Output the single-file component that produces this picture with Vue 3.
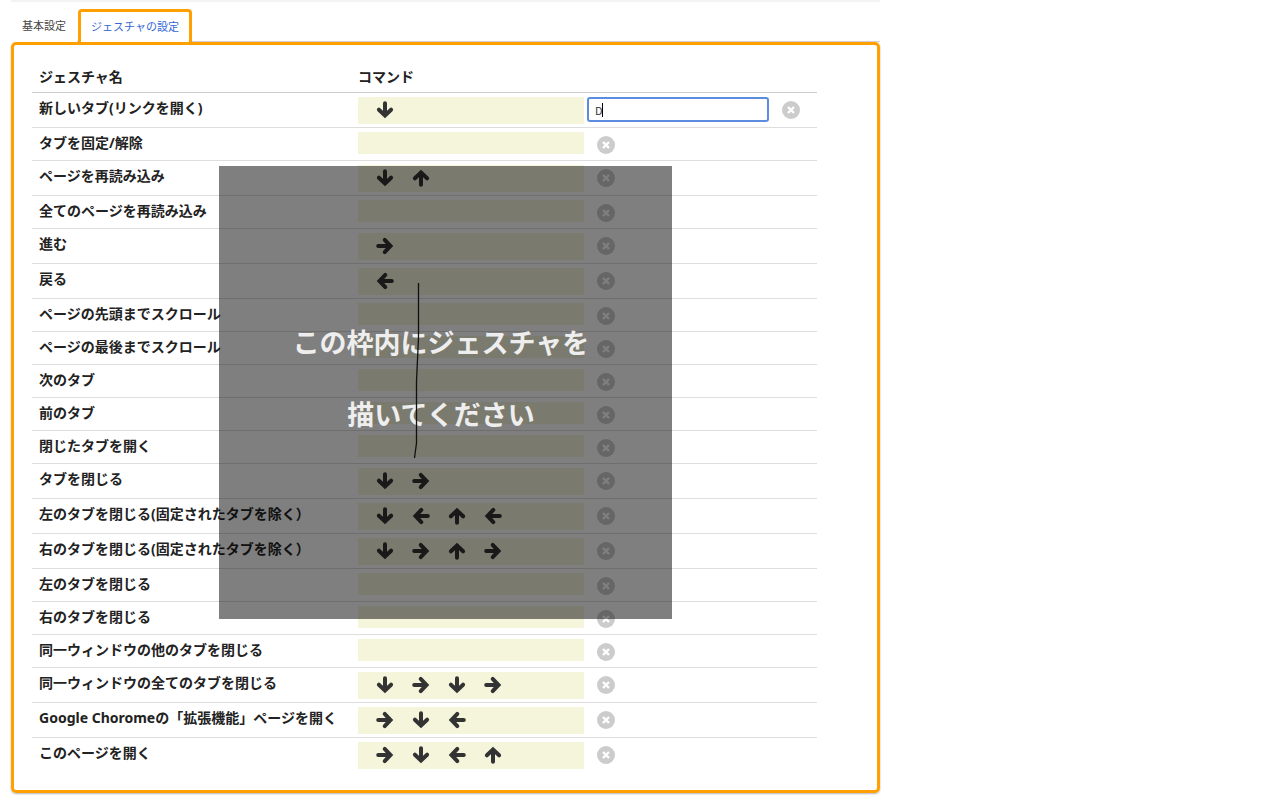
<script setup>
import { ref } from 'vue'

const command = ref('D')

const gestures = [
  { name: '新しいタブ(リンクを開く)', moves: 'D', editing: true },
  { name: 'タブを固定/解除', moves: '' },
  { name: 'ページを再読み込み', moves: 'DU' },
  { name: '全てのページを再読み込み', moves: '' },
  { name: '進む', moves: 'R' },
  { name: '戻る', moves: 'L' },
  { name: 'ページの先頭までスクロール', moves: '' },
  { name: 'ページの最後までスクロール', moves: '' },
  { name: '次のタブ', moves: '' },
  { name: '前のタブ', moves: '' },
  { name: '閉じたタブを開く', moves: '' },
  { name: 'タブを閉じる', moves: 'DR' },
  { name: '左のタブを閉じる(固定されたタブを除く）', moves: 'DLUL' },
  { name: '右のタブを閉じる(固定されたタブを除く）', moves: 'DRUR' },
  { name: '左のタブを閉じる', moves: '' },
  { name: '右のタブを閉じる', moves: '' },
  { name: '同一ウィンドウの他のタブを閉じる', moves: '' },
  { name: '同一ウィンドウの全てのタブを閉じる', moves: 'DRDR' },
  { name: 'Google Choromeの「拡張機能」ページを開く', moves: 'RDL' },
  { name: 'このページを開く', moves: 'RDLU' }
]

const turns = { D: 0, L: 90, U: 180, R: 270 }
</script>

<template>
  <main class="page">
    <nav class="tabs">
      <button type="button" class="tab">基本設定</button>
      <button type="button" class="tab active">ジェスチャの設定</button>
    </nav>

    <section class="panel">
      <table>
        <colgroup>
          <col class="name-col" />
          <col />
        </colgroup>
        <thead>
          <tr>
            <th scope="col">ジェスチャ名</th>
            <th scope="col">コマンド</th>
          </tr>
        </thead>
        <tbody>
          <tr v-for="g in gestures" :key="g.name">
            <th scope="row">{{ g.name }}</th>
            <td>
              <div class="command" :class="{ empty: !g.moves }">
                <div class="moves">
                  <svg v-for="(m, i) in g.moves" :key="i" class="arrow" viewBox="0 0 18 18">
                    <g :transform="`rotate(${turns[m]} 9 9)`">
                      <path d="M9 2.200V14M2.900 8.700L9 14.500l6.100-5.800" />
                    </g>
                  </svg>
                </div>
                <span v-if="g.editing" class="field">
                  <input v-model="command" type="text" :aria-label="g.name" />
                  <span class="caret"></span>
                </span>
                <button type="button" class="clear" :aria-label="g.name">
                  <svg viewBox="0 0 18 18">
                    <circle cx="9" cy="9" r="9" />
                    <path d="M6 6l6 6M12 6l-6 6" />
                  </svg>
                </button>
              </div>
            </td>
          </tr>
        </tbody>
      </table>
    </section>

    <div class="pad">
      <p>この枠内にジェスチャを<br />描いてください</p>
      <svg class="stroke" viewBox="0 0 453 453">
        <path d="M199.500 117V172L197.500 215V277L195.500 292" />
      </svg>
    </div>
  </main>
</template>

<style>
body {
  background: #fff;
}
</style>

<style scoped>
.page {
  position: relative;
  max-width: 869px;
  margin-left: 11px;
  padding-bottom: 7px;
  border-top: 2px solid #f3f3f3;
  color: #222;
  font-family: "Noto Sans", "Noto Sans CJK JP", sans-serif;
}

.tabs {
  display: flex;
  height: 32px;
  margin-top: 7px;
  border-bottom: 1px solid #d4d4d4;
}

.tab {
  height: 33px;
  padding: 0 11px;
  border: 0;
  background: #fff;
  color: #444;
  font-family: "Noto Sans CJK JP", sans-serif;
  font-size: 11px;
  line-height: 33px;
}

.tab.active {
  margin-left: 1px;
  padding: 0 10px 2px;
  border: 3px solid #ffa000;
  border-bottom: 0;
  border-radius: 4px 4px 0 0;
  color: #3367d6;
  line-height: 26px;
}

.panel {
  padding: 17px 60px 18px 18px;
  border: 3px solid #ffa000;
  border-radius: 5px;
  box-shadow: 0 1px 2px rgba(0, 0, 0, 0.3);
}

table {
  width: 100%;
  border-collapse: separate;
  border-spacing: 0;
  table-layout: fixed;
}

.name-col {
  width: 319px;
}

th,
td {
  padding: 0 0 0 7px;
  text-align: left;
  vertical-align: top;
}

th {
  font-size: 14px;
  font-weight: 700;
  line-height: 30px;
  white-space: nowrap;
}

tbody th,
tbody td {
  border-top: 1px solid #ddd;
}

tbody tr:first-child th,
tbody tr:first-child td {
  border-top-color: #ccc;
}

.command {
  display: flex;
  align-items: flex-start;
  padding: 4px 0 3px;
}

.command.empty {
  padding: 4px 0 6px;
}

.moves {
  display: flex;
  gap: 18px;
  width: 226px;
  height: 27px;
  padding: 4px 18px;
  box-sizing: border-box;
  background: #f5f5dc;
}

.empty .moves {
  height: 22px;
}

.arrow {
  width: 18px;
  height: 18px;
}

.arrow path {
  fill: none;
  stroke: #333;
  stroke-width: 4;
  stroke-linecap: round;
}

.field {
  position: relative;
  margin-left: 3px;
}

.field input {
  display: block;
  width: 182px;
  height: 25px;
  padding: 0 6px;
  box-sizing: border-box;
  border: 2px solid #5c8ce0;
  border-radius: 3px;
  outline: none;
  color: #333;
  font-family: "Noto Sans CJK JP", sans-serif;
  font-size: 11px;
}

.caret {
  position: absolute;
  top: 6px;
  left: 15px;
  width: 1px;
  height: 14px;
  background: #000;
}

.clear {
  width: 18px;
  height: 18px;
  margin: 4px 0 0 13px;
  padding: 0;
  border: 0;
  background: none;
}

.clear svg {
  display: block;
  width: 18px;
  height: 18px;
}

.clear circle {
  fill: #ccc;
}

.clear path {
  stroke: #fff;
  stroke-width: 2.4;
}

.pad {
  position: absolute;
  top: 164px;
  left: 208px;
  width: 453px;
  height: 453px;
  background: rgba(0, 0, 0, 0.5);
}

.pad p {
  margin: 0;
  padding: 141px 9px 0 0;
  color: #eee;
  font-size: 27px;
  font-weight: 700;
  line-height: 72px;
  text-align: center;
}

.stroke {
  position: absolute;
  inset: 0;
}

.stroke path {
  fill: none;
  stroke: #111;
  stroke-width: 1.3;
}
</style>
